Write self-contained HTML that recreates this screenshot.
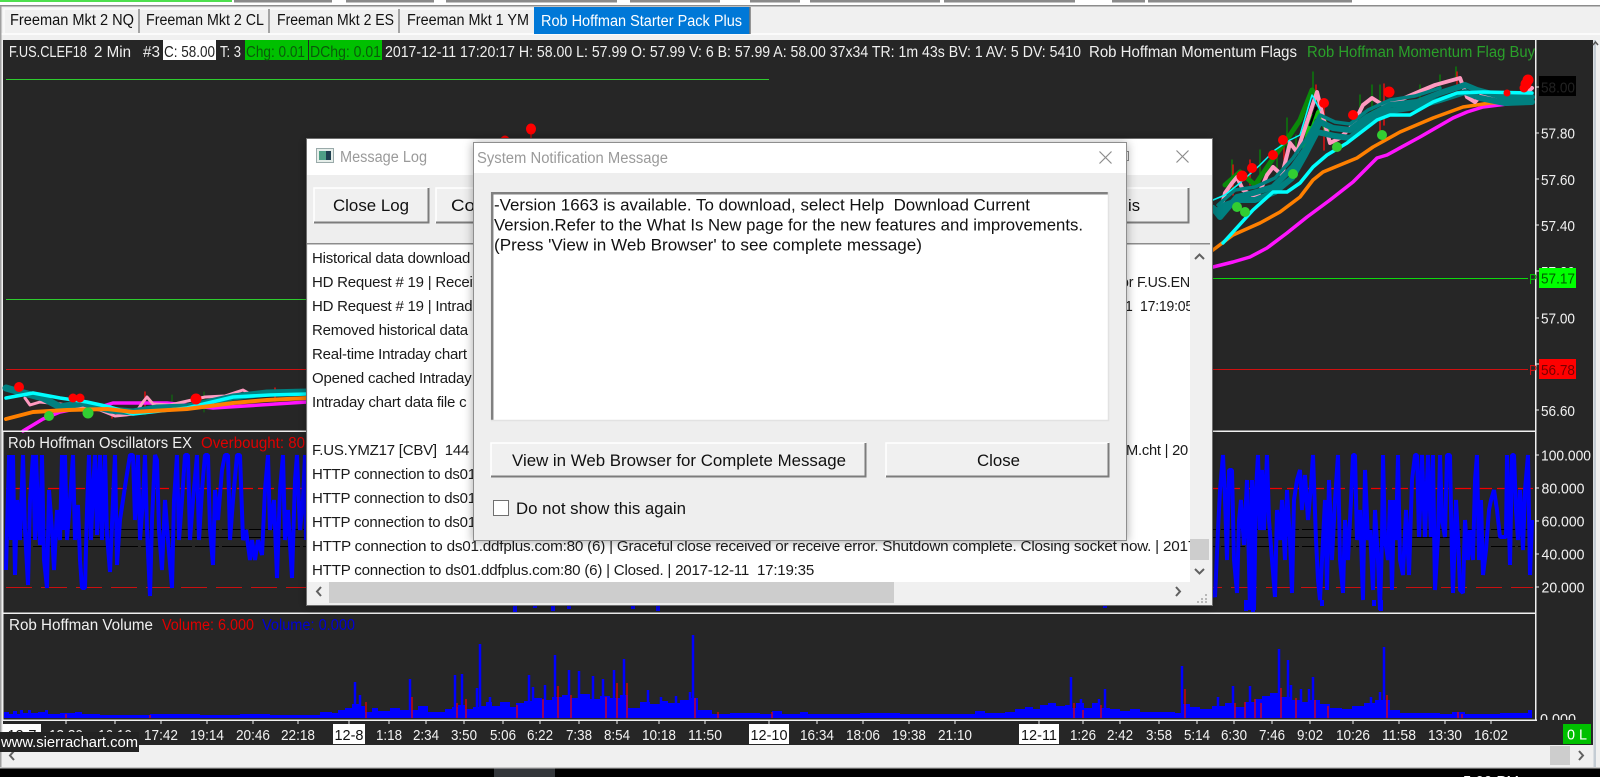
<!DOCTYPE html>
<html><head><meta charset="utf-8"><title>Rob Hoffman Starter Pack Plus</title>
<style>
html,body{margin:0;padding:0;background:#000;width:1600px;height:777px;overflow:hidden}
svg{display:block}
text{font-family:"Liberation Sans",Arial,sans-serif;white-space:pre;font-size:15px}
.w{fill:#f0f0f0}
.ax{fill:#f2f2f2;text-anchor:middle}
.lg{fill:#1a1a1a;font-size:15px;letter-spacing:-.22px}
.dl{fill:#111;font-size:16.5px}
.tt{fill:#9a9a9a;font-size:15.5px}
.tb{font-size:15.5px}
</style></head><body>
<svg width="1600" height="777" viewBox="0 0 1600 777" xmlns="http://www.w3.org/2000/svg">
<defs>
<filter id="sh" x="-5%" y="-5%" width="110%" height="110%"><feDropShadow dx="0" dy="1" stdDeviation="5" flood-color="#000" flood-opacity=".35"/></filter>
<clipPath id="cl"><rect x="3" y="40" width="1532" height="572"/></clipPath>
<clipPath id="hd"><rect x="3" y="40" width="1532" height="22"/></clipPath>
<clipPath id="z"><rect x="1536" y="700" width="50" height="20"/></clipPath>
<clipPath id="lst"><rect x="308" y="244" width="882" height="338"/></clipPath>
</defs>
<!-- window chrome -->
<rect width="1600" height="777" fill="#f0f0f0"/>
<rect width="1600" height="5" fill="#fff"/>
<rect x="0" y="0" width="232" height="2" fill="#4ee04e"/>
<path d="M234 1H332M346 1H434M446 1H617M630 1H720M750 1H800M810 1H940M944 1H1075M1112 1H1145M1148 1H1352" stroke="#8a8a8a" stroke-width="3"/>
<rect x="0" y="5" width="1600" height="1.5" fill="#8c8c8c"/>
<rect x="0" y="33" width="1600" height="2" fill="#fbfbfb"/>
<!-- tabs -->
<g>
<path d="M4 33V9H139V33M139 9H269V33M269 9H399V33M399 9H534" fill="none" stroke="#fff" stroke-width="1"/>
<path d="M139 9V33M269 9V33M399 9V33" stroke="#8a8a8a" stroke-width="1.5"/>
<rect x="534" y="7" width="216" height="27" fill="#0078d7"/>
<path d="M750 7V34" stroke="#777" stroke-width="1.5"/>
<text x="10" y="25" class="tb" fill="#111" textLength="124" lengthAdjust="spacingAndGlyphs">Freeman Mkt 2 NQ</text>
<text x="146" y="25" class="tb" fill="#111" textLength="118" lengthAdjust="spacingAndGlyphs">Freeman Mkt 2 CL</text>
<text x="277" y="25" class="tb" fill="#111" textLength="117" lengthAdjust="spacingAndGlyphs">Freeman Mkt 2 ES</text>
<text x="407" y="25" class="tb" fill="#111" textLength="122" lengthAdjust="spacingAndGlyphs">Freeman Mkt 1 YM</text>
<text x="541" y="26" class="tb" fill="#fff" textLength="201" lengthAdjust="spacingAndGlyphs">Rob Hoffman Starter Pack Plus</text>
</g>
<!-- chart background -->
<rect x="3" y="40" width="1590" height="705" fill="#262626"/>
<rect x="0" y="6" width="1.5" height="762" fill="#a0a0a0"/>
<rect x="1593.5" y="40" width="2.5" height="728" fill="#c4ccd4"/>
<path d="M1593 45l2.500-3 2.500 3" fill="none" stroke="#555" stroke-width="1.500"/>
<!-- header -->
<rect x="163" y="40" width="53" height="20" fill="#fff"/>
<rect x="245" y="40" width="63" height="20" fill="#00c000"/>
<rect x="309" y="40" width="73" height="20" fill="#00c000"/>
<g clip-path="url(#hd)">
<text x="9" y="57" class="w tb" textLength="78" lengthAdjust="spacingAndGlyphs">F.US.CLEF18</text>
<text x="94" y="57" class="w tb" textLength="37" lengthAdjust="spacingAndGlyphs">2 Min</text>
<text x="143" y="57" class="w tb" textLength="17" lengthAdjust="spacingAndGlyphs">#3</text>
<text x="164" y="57" class="tb" fill="#222" textLength="51" lengthAdjust="spacingAndGlyphs">C: 58.00</text>
<text x="220" y="57" class="w tb" textLength="21" lengthAdjust="spacingAndGlyphs">T: 3</text>
<text x="246" y="57" class="tb" fill="#0b5a0b" textLength="59" lengthAdjust="spacingAndGlyphs">Chg: 0.01</text>
<text x="310" y="57" class="tb" fill="#0b5a0b" textLength="71" lengthAdjust="spacingAndGlyphs">DChg: 0.01</text>
<text x="385" y="57" class="w tb" textLength="696" lengthAdjust="spacingAndGlyphs">2017-12-11 17:20:17 H: 58.00 L: 57.99 O: 57.99 V: 6 B: 57.99 A: 58.00 37x34 TR: 1m 43s BV: 1 AV: 5 DV: 5410</text>
<text x="1089" y="57" class="w tb" textLength="208" lengthAdjust="spacingAndGlyphs">Rob Hoffman Momentum Flags</text>
<text x="1307" y="57" class="tb" fill="#2aa02a" textLength="228" lengthAdjust="spacingAndGlyphs">Rob Hoffman Momentum Flag Buy</text>
</g>
<!-- price pane levels -->
<path d="M6 79.500H769" stroke="#2ecc2e" stroke-width="1"/>
<path d="M6 299.500H306" stroke="#2ecc2e" stroke-width="1"/>
<path d="M1212 278.500H1528" stroke="#0dd80d" stroke-width="1"/>
<path d="M6 369.500H1528" stroke="#d01010" stroke-width="1"/>
<!-- left price action -->
<g fill="none" stroke-linejoin="round" stroke-linecap="round">
<path d="M145 392V415M172 395V410M204 392V412M275 392V405" stroke="#0a7a0a" stroke-width="1"/>
<path d="M145 392V412M112 410V418M275 388V398" stroke="#e01010" stroke-width="1.500"/>
<polyline points="23,431 43,419 60,412 80,408 100,407 113,403 167,403 213,408 307,402" stroke="#ff14ff" stroke-width="3.500"/>
<polyline points="25,398 30,405 40,402 60,404 100,410 115,416 135,414 143,402 147,397 153,404 170,405 205,397 225,396 243,390 252,395" stroke="#ff9ac0" stroke-width="3"/>
<polyline points="6,388 20,392 43,398 60,407 83,403 110,410 133,412 157,408 187,407 233,397 267,393 307,392" stroke="#008080" stroke-width="7"/>
<polyline points="6,398 33,393 60,398 87,402 110,407 133,414 187,408 233,397 270,395 307,394" stroke="#00ffff" stroke-width="3.500"/>
<polyline points="6,419 33,412 67,410 107,409 133,412 187,409 233,403 267,400 307,398" stroke="#ff8000" stroke-width="4"/>
</g>
<g fill="#f00"><circle cx="19" cy="387" r="5"/><circle cx="73" cy="398" r="4.500"/><circle cx="80" cy="398" r="4.500"/><circle cx="196" cy="399" r="5.500"/><circle cx="505" cy="140" r="4.500"/><ellipse cx="531" cy="129" rx="5" ry="5.500"/></g>
<path d="M531 129V138" stroke="#f00" stroke-width="1"/>
<g fill="#32cd32"><circle cx="49" cy="416" r="5"/><circle cx="88" cy="413" r="5.500"/></g>
<!-- right price action -->
<g fill="none" stroke-linejoin="round" stroke-linecap="round">
<path d="M1232 160V190M1260 150V185M1277 150V175M1287 118V150M1313 72V95M1360 95V130M1372 85V110M1380 85V105M1440 75V90M1456 67V80M1296 135V150M1420 85V100" stroke="#0a7a0a" stroke-width="1.500"/>
<path d="M1233 165V195M1250 160V185M1284 140V160M1316 85V100M1384 84V125M1324 100V150M1457 72V85M1380 120V135" stroke="#e01010" stroke-width="1.500"/>
<polyline points="1225,185 1240,172 1255,185 1272,160 1290,135 1300,120 1312,90 1322,105" stroke="#0a8a0a" stroke-width="5"/>
<polyline points="1305,150 1312,118 1320,112 1327,130" stroke="#10c010" stroke-width="6"/>
<polyline points="1213,267 1233,262 1250,257 1267,248 1287,233 1307,217 1330,200 1353,182 1377,158 1387,155 1420,137 1453,118 1467,112 1483,107 1507,104 1532,102" stroke="#ff14ff" stroke-width="3.500"/>
<polyline points="1213,250 1233,235 1260,223 1280,212 1300,197 1313,180 1323,172 1357,158 1373,147 1400,132 1433,118 1463,107 1490,103 1532,101" stroke="#ff8000" stroke-width="3.500"/>
<polyline points="1213,207 1220,213 1225,193 1232,183 1237,177 1243,190 1257,198 1267,175 1273,167 1282,175 1290,143 1297,152 1317,92 1323,117 1330,143 1340,138 1353,125 1363,105 1372,98 1383,105 1400,100 1423,90 1435,85 1460,78 1467,97 1475,102 1483,93 1500,102 1517,102 1532,88" stroke="#ff9ac0" stroke-width="4"/>
<polyline points="1213,200 1225,195 1240,183 1260,165 1275,150 1290,140 1300,135 1312,95 1320,110" stroke="#00ffff" stroke-width="1.500"/>
<polyline points="1213,208 1220,217 1237,197 1253,193 1273,187 1293,167 1307,147 1320,122 1333,128 1350,130 1367,117 1390,105 1417,102 1440,93 1465,85 1477,90 1503,97 1532,97" stroke="#008080" stroke-width="6"/>
<polyline points="1216,212 1225,205 1240,200 1255,200 1275,192 1292,178 1305,155 1317,132 1335,136 1350,138 1365,125 1385,112 1415,107 1440,100 1465,92 1480,98 1505,103 1532,102" stroke="#008080" stroke-width="6"/>
<polyline points="1218,205 1235,190 1255,187 1275,178 1293,158 1307,138 1320,115 1335,122 1350,124 1368,110 1390,100 1415,96 1440,88" stroke="#008080" stroke-width="3.500"/>
<polyline points="1223,243 1253,210 1273,192 1287,192 1300,183 1313,167 1327,155 1347,143 1377,120 1390,115 1410,115 1433,102 1457,93 1483,92 1532,93" stroke="#00ffff" stroke-width="3.500"/>
<path d="M1310 125L1316 108" stroke="#000" stroke-width="2.500"/>
</g>
<g fill="#f00"><circle cx="1242" cy="176" r="5.500"/><circle cx="1252" cy="168" r="5"/><circle cx="1273" cy="155" r="5"/><circle cx="1283" cy="140" r="5"/><circle cx="1324" cy="103" r="5"/><circle cx="1353" cy="115" r="5"/><circle cx="1389" cy="92" r="5.500"/><circle cx="1528" cy="80" r="5.500"/><circle cx="1526" cy="84" r="5.500"/><circle cx="1524" cy="88" r="4.500"/><circle cx="1507" cy="93" r="3.500"/></g>
<g fill="#32cd32"><circle cx="1237" cy="207" r="5"/><circle cx="1245" cy="212" r="5"/><circle cx="1293" cy="174" r="5"/><circle cx="1337" cy="147" r="5"/><circle cx="1382" cy="135" r="5"/></g>
<!-- dividers and axis line -->
<rect x="1535" y="40" width="1.500" height="681" fill="#f0f0f0"/>
<rect x="3" y="430.500" width="1532" height="1.500" fill="#f0f0f0"/>
<rect x="3" y="612.500" width="1532" height="1.500" fill="#f0f0f0"/>
<rect x="3" y="719.500" width="1534" height="1.500" fill="#f0f0f0"/>
<rect x="2.500" y="431" width="1" height="289" fill="#f0f0f0"/>
<!-- price axis -->
<path d="M1536 87h3M1536 133h3M1536 179h3M1536 225h3M1536 271h3M1536 318h3M1536 364h3M1536 410h3M1536 455h3M1536 488h3M1536 521h3M1536 554h3M1536 587h3" stroke="#f0f0f0" stroke-width="1"/>
<rect x="1539" y="76" width="37" height="20" fill="#000"/>
<text x="1541" y="92.500" fill="#222" textLength="34" lengthAdjust="spacingAndGlyphs">58.00</text>
<text x="1541" y="138.500" class="w" textLength="34" lengthAdjust="spacingAndGlyphs">57.80</text>
<text x="1541" y="185" class="w" textLength="34" lengthAdjust="spacingAndGlyphs">57.60</text>
<text x="1541" y="231" class="w" textLength="34" lengthAdjust="spacingAndGlyphs">57.40</text>
<text x="1541" y="277" class="w" textLength="34" lengthAdjust="spacingAndGlyphs">57.20</text>
<rect x="1539" y="268" width="37" height="20" fill="#00ff00"/>
<text x="1541" y="283.500" fill="#006000" textLength="34" lengthAdjust="spacingAndGlyphs">57.17</text>
<text x="1529" y="284" fill="#00c000" textLength="8" lengthAdjust="spacingAndGlyphs">P</text>
<text x="1541" y="323.500" class="w" textLength="34" lengthAdjust="spacingAndGlyphs">57.00</text>
<rect x="1539" y="359" width="37" height="20" fill="#ff0000"/>
<text x="1541" y="375" fill="#7a0000" textLength="34" lengthAdjust="spacingAndGlyphs">56.78</text>
<text x="1529" y="375" fill="#d01010" textLength="8" lengthAdjust="spacingAndGlyphs">P</text>
<text x="1541" y="416" class="w" textLength="34" lengthAdjust="spacingAndGlyphs">56.60</text>
<!-- oscillator pane -->
<text x="8" y="448" class="w tb" textLength="184" lengthAdjust="spacingAndGlyphs">Rob Hoffman Oscillators EX</text>
<text x="201" y="448" class="tb" fill="#e00000" textLength="104" lengthAdjust="spacingAndGlyphs">Overbought: 80</text>
<path d="M6 488.500H1533" stroke="#f00000" stroke-width="1.200" stroke-dasharray="16 5"/>
<path d="M6 587.500H1533" stroke="#c81010" stroke-width="1" stroke-dasharray="26 9"/>
<path d="M6 529.500H1533M6 546.500H1533" stroke="#000" stroke-width="1" stroke-dasharray="24 3"/>
<path d="M6 537.500H1533" stroke="#000" stroke-width="1"/>
<g clip-path="url(#cl)" fill="none" stroke="#0000ff" stroke-width="4" stroke-linejoin="bevel">
<polyline points="6,570 9,455 11,540 13,455 15,575 17,500 20,540 23,455 25,530 28,585 30,500 33,455 35,540 36,455 38,510 40,545 42,455 44,560 47,588 49,490 52,530 54,570 57,510 60,540 62,455 64,530 65,455 67,540 70,500 73,455 75,540 78,505 80,560 82,588 85,588 87,510 89,455 91,540 93,490 95,455 97,535 100,455 102,540 105,455 107,535 110,572 113,500 115,455 117,565 120,520 123,500 126,480 130,455 133,455 135,520 138,455 140,540 143,500 145,455 147,530 150,596 152,520 155,455 157,460 159,530 162,570 165,500 168,540 172,588 174,500 177,455 179,540 182,500 185,455 188,455 190,540 193,500 197,455 199,540 202,490 205,455 208,455 210,530 213,565 215,490 218,520 222,470 225,455 228,455 230,540 233,500 237,455 240,455 243,540 246,530 250,560 252,540 255,560 258,540 262,555 265,490 268,455 270,530 274,500 277,578 280,490 283,455 285,540 288,510 292,578 295,480 297,455 300,530 303,500 305,455 306,540"/>
<polyline points="1213,590 1215,597 1218,530 1220,490 1223,455 1225,500 1227,560 1229,470 1232,470 1234,560 1237,593 1239,520 1241,500 1244,545 1247,480 1250,610 1252,480 1254,610 1256,490 1258,455 1260,530 1262,470 1264,530 1267,455 1269,520 1272,560 1275,597 1277,510 1280,540 1282,500 1285,560 1287,490 1290,540 1292,593 1294,500 1297,480 1300,470 1302,510 1305,475 1308,520 1311,485 1313,455 1316,540 1318,580 1320,600 1322,560 1325,500 1327,590 1329,480 1332,560 1335,500 1338,455 1340,560 1343,593 1345,520 1348,560 1351,500 1353,455 1355,455 1357,540 1360,510 1363,600 1365,470 1368,540 1370,530 1373,590 1375,510 1378,560 1380,610 1382,540 1383,455 1385,540 1388,560 1390,500 1392,590 1394,500 1396,540 1398,455 1400,560 1403,575 1406,510 1409,575 1412,480 1415,455 1417,455 1419,537 1422,455 1425,537 1428,455 1431,537 1433,455 1435,590 1438,537 1440,455 1442,520 1445,537 1447,455 1450,455 1452,560 1453,593 1456,500 1458,537 1460,590 1463,593 1465,520 1468,560 1470,530 1473,560 1475,480 1477,455 1479,560 1481,500 1483,575 1486,550 1489,510 1491,500 1494,490 1497,510 1500,537 1503,537 1506,537 1507,455 1510,565 1512,455 1514,455 1516,510 1518,540 1520,490 1523,550 1525,490 1528,455 1530,575 1532,520"/>
<path d="M515 600V612M535 600V608M553 600V611M569 600V609M633 600V609M658 600V611M1105 600V608M1246 600V611M1253 600V612M1322 600V606M1374 600V606M1381 600V611"/>
</g>
<g class="ax">
<text x="1566" y="460.500" textLength="50" lengthAdjust="spacingAndGlyphs">100.000</text>
<text x="1563" y="493.500" textLength="43" lengthAdjust="spacingAndGlyphs">80.000</text>
<text x="1563" y="526.500" textLength="43" lengthAdjust="spacingAndGlyphs">60.000</text>
<text x="1563" y="559.500" textLength="43" lengthAdjust="spacingAndGlyphs">40.000</text>
<text x="1563" y="592.500" textLength="43" lengthAdjust="spacingAndGlyphs">20.000</text>
</g>
<!-- volume pane -->
<text x="9" y="630" class="w tb" textLength="144" lengthAdjust="spacingAndGlyphs">Rob Hoffman Volume</text>
<text x="162" y="630" class="tb" fill="#e00000" textLength="92" lengthAdjust="spacingAndGlyphs">Volume: 6.000</text>
<text x="262" y="630" class="tb" fill="#0000d8" textLength="93" lengthAdjust="spacingAndGlyphs">Volume: 0.000</text>
<path fill="#0000ff" d="M4 718V712H9V714H13V711H17V714H20V710H23V713H28V710H31V713H38V712H45V710H48V714H60V713H75V712H82V714H100V715H150V714H200V715H240V714H270V715H320V712H332V713H338V710H345V708H352V704H359V706H365V712H372V708H378V711H390V708H400V710H418V706H428V712H445V709H452V707H458V705H465V709H473V707H480V706H486V702H492V706H500V702H510V707H516V703H524V701H534V698H542V700H552V697H562V695H570V698H580V694H590V699H600V696H610V698H620V695H628V708H640V702H650V704H660V701H668V703H680V700H690V698H698V710H712V714H730V713H760V714H772V711H782V714H800V712H808V714H860V713H900V714H975V711H985V713H1005V712H1015V709H1025V707H1033V709H1040V705H1048V703H1056V706H1065V705H1070V708H1076V703H1084V708H1092V703H1100V708H1110V709H1120V711H1130V709H1140V712H1175V713H1182V704H1190V707H1200V709H1212V706H1225V703H1232V707H1245V702H1255V699H1262V696H1270V693H1280V697H1290V700H1300V702H1310V700H1320V704H1330V708H1342V709H1352V706H1364V703H1375V700H1390V710H1400V713H1440V714H1452V712H1465V714H1500V713H1528V710H1532V718Z"/>
<path fill="none" stroke="#0000ff" stroke-width="2.500" d="M355 718V682M360 718V695M410 718V679M455 718V675M462 718V674M480 718V644M477 718V688M490 718V697M529 718V675M533 718V687M545 718V685M555 718V655M569 718V670M579 718V671M593 718V676M603 718V679M614 718V670M624 718V659M648 718V690M661 718V697M676 718V696M693 718V635M690 718V692M1071 718V677M1081 718V699M1099 718V699M1105 718V689M1182 718V666M1218 718V697M1233 718V686M1250 718V686M1279 718V649M1288 718V660M1291 718V685M1301 718V689M1309 718V689M1313 718V677M1371 718V697M1384 718V647M1380 718V692"/>
<path fill="none" stroke="#f00000" stroke-width="1.200" d="M66 718V714M150 718V715M366 718V702M412 718V697M457 718V703M466 718V699M517 718V705M543 718V699M558 718V686M571 718V695M606 718V697M617 718V683M627 718V683M695 718V698M718 718V712M772 718V712M1074 718V703M1083 718V710M1101 718V705M1185 718V689M1235 718V703M1245 718V702M1255 718V699M1261 718V703M1281 718V688M1296 718V698M1315 718V700M1328 718V706M1387 718V695M1458 718V712M1462 718V714"/>
<text x="1540" y="724" class="w" clip-path="url(#z)" textLength="36" lengthAdjust="spacingAndGlyphs">0.000</text>
<!-- time axis -->
<path stroke="#f0f0f0" stroke-width="1" d="M66 721v3M115 721v3M161 721v3M207 721v3M253 721v3M298 721v3M349 721v3M389 721v3M426 721v3M464 721v3M503 721v3M540 721v3M579 721v3M617 721v3M659 721v3M705 721v3M769 721v3M817 721v3M863 721v3M909 721v3M955 721v3M1039 721v3M1083 721v3M1120 721v3M1159 721v3M1197 721v3M1234 721v3M1272 721v3M1310 721v3M1353 721v3M1399 721v3M1445 721v3M1491 721v3"/>
<rect x="3" y="724" width="38" height="20" fill="#fff"/>
<rect x="333" y="724" width="32" height="20" fill="#fff"/>
<rect x="749" y="724" width="40" height="20" fill="#fff"/>
<rect x="1019" y="724" width="40" height="20" fill="#fff"/>
<g class="ax">
<text x="22" y="740" style="fill:#111" textLength="29" lengthAdjust="spacingAndGlyphs">12-7</text>
<text x="66" y="740" textLength="34" lengthAdjust="spacingAndGlyphs">13:30</text>
<text x="115" y="740" textLength="34" lengthAdjust="spacingAndGlyphs">16:10</text>
<text x="161" y="740" textLength="34" lengthAdjust="spacingAndGlyphs">17:42</text>
<text x="207" y="740" textLength="34" lengthAdjust="spacingAndGlyphs">19:14</text>
<text x="253" y="740" textLength="34" lengthAdjust="spacingAndGlyphs">20:46</text>
<text x="298" y="740" textLength="34" lengthAdjust="spacingAndGlyphs">22:18</text>
<text x="349" y="740" style="fill:#111" textLength="29" lengthAdjust="spacingAndGlyphs">12-8</text>
<text x="389" y="740" textLength="26" lengthAdjust="spacingAndGlyphs">1:18</text>
<text x="426" y="740" textLength="26" lengthAdjust="spacingAndGlyphs">2:34</text>
<text x="464" y="740" textLength="26" lengthAdjust="spacingAndGlyphs">3:50</text>
<text x="503" y="740" textLength="26" lengthAdjust="spacingAndGlyphs">5:06</text>
<text x="540" y="740" textLength="26" lengthAdjust="spacingAndGlyphs">6:22</text>
<text x="579" y="740" textLength="26" lengthAdjust="spacingAndGlyphs">7:38</text>
<text x="617" y="740" textLength="26" lengthAdjust="spacingAndGlyphs">8:54</text>
<text x="659" y="740" textLength="34" lengthAdjust="spacingAndGlyphs">10:18</text>
<text x="705" y="740" textLength="34" lengthAdjust="spacingAndGlyphs">11:50</text>
<text x="769" y="740" style="fill:#111" textLength="37" lengthAdjust="spacingAndGlyphs">12-10</text>
<text x="817" y="740" textLength="34" lengthAdjust="spacingAndGlyphs">16:34</text>
<text x="863" y="740" textLength="34" lengthAdjust="spacingAndGlyphs">18:06</text>
<text x="909" y="740" textLength="34" lengthAdjust="spacingAndGlyphs">19:38</text>
<text x="955" y="740" textLength="34" lengthAdjust="spacingAndGlyphs">21:10</text>
<text x="1039" y="740" style="fill:#111" textLength="36" lengthAdjust="spacingAndGlyphs">12-11</text>
<text x="1083" y="740" textLength="26" lengthAdjust="spacingAndGlyphs">1:26</text>
<text x="1120" y="740" textLength="26" lengthAdjust="spacingAndGlyphs">2:42</text>
<text x="1159" y="740" textLength="26" lengthAdjust="spacingAndGlyphs">3:58</text>
<text x="1197" y="740" textLength="26" lengthAdjust="spacingAndGlyphs">5:14</text>
<text x="1234" y="740" textLength="26" lengthAdjust="spacingAndGlyphs">6:30</text>
<text x="1272" y="740" textLength="26" lengthAdjust="spacingAndGlyphs">7:46</text>
<text x="1310" y="740" textLength="26" lengthAdjust="spacingAndGlyphs">9:02</text>
<text x="1353" y="740" textLength="34" lengthAdjust="spacingAndGlyphs">10:26</text>
<text x="1399" y="740" textLength="34" lengthAdjust="spacingAndGlyphs">11:58</text>
<text x="1445" y="740" textLength="34" lengthAdjust="spacingAndGlyphs">13:30</text>
<text x="1491" y="740" textLength="34" lengthAdjust="spacingAndGlyphs">16:02</text>
</g>
<rect x="1563" y="724" width="28" height="20" fill="#00c000"/>
<text x="1577" y="739.500" fill="#fff" text-anchor="middle" textLength="20" lengthAdjust="spacingAndGlyphs">0 L</text>
<!-- bottom scrollbar -->
<rect x="3" y="745" width="1590" height="22" fill="#f0f0f0"/>
<rect x="1550" y="746" width="20" height="19" fill="#cdcdcd"/>
<path d="M14 751l-4 4.500 4 4.500M1579 751l4 4.500-4 4.500" fill="none" stroke="#606060" stroke-width="2"/>
<rect x="0" y="767" width="1600" height="1.500" fill="#c8c8c8"/>
<rect x="0" y="768.500" width="1600" height="9" fill="#000"/>
<rect x="494" y="768.500" width="61" height="9" fill="#33363a"/>
<text x="1463" y="786" fill="#fff" textLength="56" lengthAdjust="spacingAndGlyphs">5:00 PM</text>
<rect x="0" y="732" width="139" height="20" fill="#222"/>
<text x="1" y="747" fill="#fff" textLength="137" lengthAdjust="spacingAndGlyphs">www.sierrachart.com</text>
<!-- Message Log window -->
<g filter="url(#sh)"><rect x="306" y="138" width="906" height="468" fill="#eeeeee"/></g>
<rect x="306" y="138" width="906" height="37" fill="#fff"/>
<rect x="306.500" y="138.500" width="906" height="467" fill="none" stroke="#6e6e6e" stroke-width="1"/>
<g>
<rect x="316.500" y="148.500" width="17" height="14" fill="#e6eeea" stroke="#9aaaaa"/>
<rect x="319" y="151" width="7" height="9" fill="#4f9f86"/>
<rect x="326" y="151" width="5" height="9" fill="#1f3f4f"/>
<text x="340" y="162" class="tt" textLength="87" lengthAdjust="spacingAndGlyphs">Message Log</text>
<path d="M1119.500 151.500h9v9h-9z" fill="none" stroke="#8c8c8c"/>
<path d="M1176.500 150.500l12 12M1188.500 150.500l-12 12" stroke="#8c8c8c" stroke-width="1.200" fill="none"/>
</g>
<g>
<rect x="314" y="188" width="115" height="35" fill="#f0f0f0"/>
<path d="M314 223V188H429" fill="none" stroke="#fff" stroke-width="1.500"/>
<path d="M314 222.500H428.500V188" fill="none" stroke="#7c7c7c" stroke-width="2"/>
<text x="333" y="211" class="dl" textLength="76" lengthAdjust="spacingAndGlyphs">Close Log</text>
<rect x="436" y="188" width="753" height="35" fill="#f0f0f0"/>
<path d="M436 223V188H1189" fill="none" stroke="#fff" stroke-width="1.500"/>
<path d="M436 222.500H1188.500V188" fill="none" stroke="#7c7c7c" stroke-width="2"/>
<text x="451" y="211" class="dl" textLength="24" lengthAdjust="spacingAndGlyphs">Co</text>
<text x="1128" y="211" class="dl" textLength="12" lengthAdjust="spacingAndGlyphs">is</text>
</g>
<rect x="307" y="243" width="903" height="1.500" fill="#8c8c8c"/>
<rect x="308" y="244.500" width="882" height="338" fill="#fff"/>
<g clip-path="url(#lst)">
<text x="312" y="263" class="lg">Historical data download</text>
<text x="312" y="287" class="lg">HD Request # 19 | Received</text>
<text x="312" y="311" class="lg">HD Request # 19 | Intraday</text>
<text x="312" y="335" class="lg">Removed historical data</text>
<text x="312" y="359" class="lg">Real-time Intraday chart</text>
<text x="312" y="383" class="lg">Opened cached Intraday</text>
<text x="312" y="407" class="lg">Intraday chart data file c</text>
<text x="312" y="455" class="lg">F.US.YMZ17 [CBV]  144 T</text>
<text x="312" y="479" class="lg">HTTP connection to ds01</text>
<text x="312" y="503" class="lg">HTTP connection to ds01</text>
<text x="312" y="527" class="lg">HTTP connection to ds01</text>
<text x="312" y="551" class="lg" textLength="884" lengthAdjust="spacingAndGlyphs">HTTP connection to ds01.ddfplus.com:80 (6) | Graceful close received or receive error. Shutdown complete. Closing socket now. | 2017</text>
<text x="312" y="575" class="lg" textLength="502" lengthAdjust="spacingAndGlyphs">HTTP connection to ds01.ddfplus.com:80 (6) | Closed. | 2017-12-11  17:19:35</text>
<text x="1121" y="287" class="lg" textLength="69" lengthAdjust="spacingAndGlyphs">or F.US.EN</text>
<text x="1125" y="311" class="lg" textLength="68" lengthAdjust="spacingAndGlyphs">1  17:19:05</text>
<text x="1126" y="455" class="lg" textLength="62" lengthAdjust="spacingAndGlyphs">M.cht | 20</text>
</g>
<!-- log scrollbars -->
<rect x="1190" y="244.500" width="20" height="338" fill="#f0f0f0"/>
<rect x="1190" y="539" width="19" height="21" fill="#cdcdcd"/>
<path d="M1195 259l4.500-4.500 4.500 4.500M1195 569l4.500 4.500 4.500-4.500" fill="none" stroke="#606060" stroke-width="2"/>
<rect x="308" y="582" width="902" height="21" fill="#f0f0f0"/>
<rect x="329" y="582" width="565" height="21" fill="#cdcdcd"/>
<path d="M321 587l-4 4.500 4 4.500M1176 587l4 4.500-4 4.500" fill="none" stroke="#606060" stroke-width="2"/>
<path d="M1205 594h2v2h-2zM1201 598h2v2h-2zM1205 598h2v2h-2zM1197 601h2v2h-2zM1201 601h2v2h-2zM1205 601h2v2h-2z" fill="#b8b8b8"/>
<!-- System Notification Message -->
<g filter="url(#sh)"><rect x="473" y="142" width="654" height="399" fill="#eeeeee"/></g>
<rect x="473" y="142" width="654" height="31" fill="#fff"/>
<rect x="473.500" y="142.500" width="653" height="398" fill="none" stroke="#8e8e8e" stroke-width="1"/>
<text x="477" y="163" class="tt" textLength="191" lengthAdjust="spacingAndGlyphs">System Notification Message</text>
<path d="M1099.500 151.500l12 12M1111.500 151.500l-12 12" stroke="#8c8c8c" stroke-width="1.200" fill="none"/>
<rect x="491" y="192" width="617" height="228" fill="#fff"/>
<path d="M492.200 420V193.200H1108" fill="none" stroke="#808080" stroke-width="2.500"/>
<path d="M491 420.500H1108.500V192" fill="none" stroke="#e2e2e2" stroke-width="1.500"/>
<text x="494" y="210.500" class="dl" textLength="536" lengthAdjust="spacingAndGlyphs">-Version 1663 is available. To download, select Help  Download Current</text>
<text x="494" y="230.500" class="dl" textLength="589" lengthAdjust="spacingAndGlyphs">Version.Refer to the What Is New page for the new features and improvements.</text>
<text x="494" y="250.500" class="dl" textLength="428" lengthAdjust="spacingAndGlyphs">(Press 'View in Web Browser' to see complete message)</text>
<rect x="491" y="443" width="375" height="34" fill="#f0f0f0"/>
<path d="M491 477V443H866" fill="none" stroke="#fff" stroke-width="1.500"/>
<path d="M491 476.500H865.500V443" fill="none" stroke="#7c7c7c" stroke-width="2"/>
<text x="512" y="466" class="dl" textLength="334" lengthAdjust="spacingAndGlyphs">View in Web Browser for Complete Message</text>
<rect x="886" y="443" width="223" height="34" fill="#f0f0f0"/>
<path d="M886 477V443H1109" fill="none" stroke="#fff" stroke-width="1.500"/>
<path d="M886 476.500H1108.500V443" fill="none" stroke="#7c7c7c" stroke-width="2"/>
<text x="977" y="466" class="dl" textLength="43" lengthAdjust="spacingAndGlyphs">Close</text>
<rect x="493.500" y="500.500" width="15" height="15" fill="#fff" stroke="#707070"/>
<text x="516" y="514" class="dl" textLength="170" lengthAdjust="spacingAndGlyphs">Do not show this again</text>
</svg>
</body></html>
